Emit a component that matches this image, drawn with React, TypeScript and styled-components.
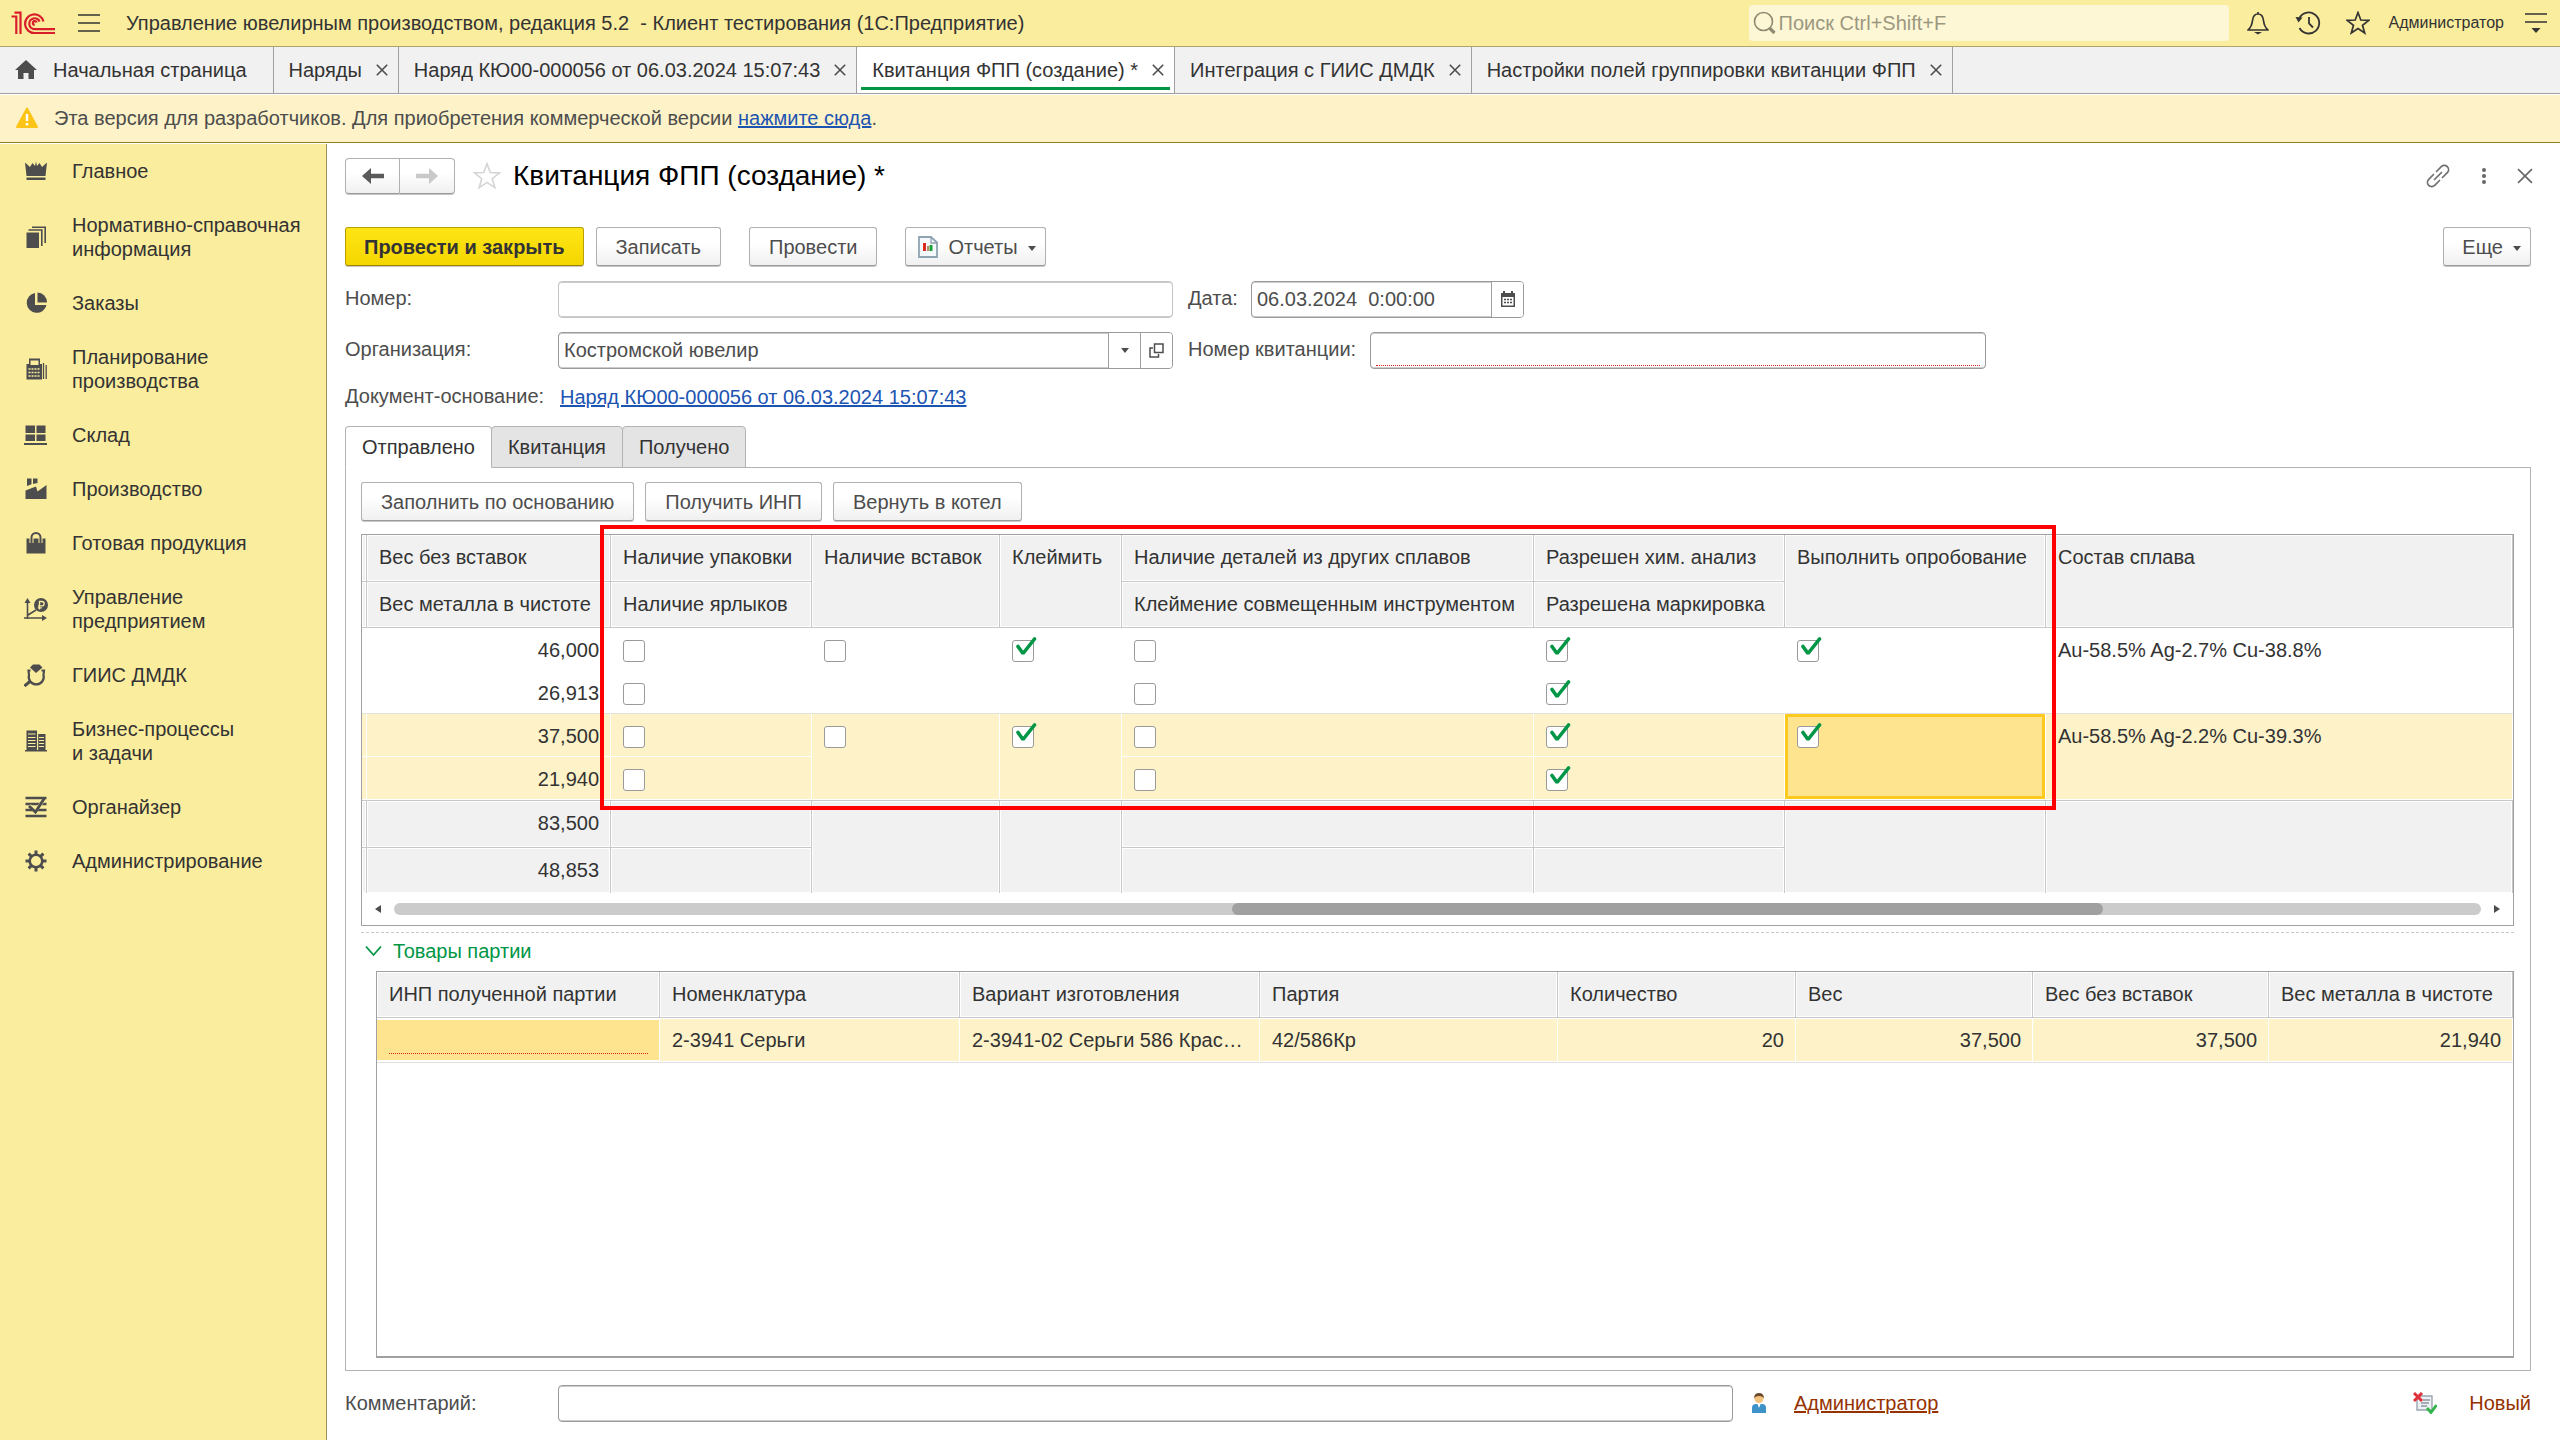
import React from "react";
import styled, { createGlobalStyle, css } from "styled-components";

const c = {
  header: "#fbed9e",
  pale: "#fdf2c8",
  active: "#fee48f",
  grey: "#f1f1f1",
  line: "#c8c8c8",
  frame: "#a0a0a0",
  text: "#333333",
  soft: "#4d4d4d",
  green: "#009646",
  blue: "#1c54b2",
  brown: "#963200",
};

const GlobalStyle = createGlobalStyle`
  *, *::before, *::after { box-sizing: border-box; }
  body { margin: 0; background: #fff; }
  body, button, input {
    font-family: "Liberation Sans", Arial, sans-serif;
    font-size: 20px;
    line-height: 24px;
    color: ${c.text};
  }
  button { cursor: pointer; }
  svg { display: block; flex: none; }
`;

/* ---------- shell ---------- */

const Page = styled.div`
  display: flex;
  flex-direction: column;
  min-height: 100vh;
`;

const TopBar = styled.header`
  display: flex;
  align-items: center;
  height: 47px;
  padding: 0 12px 0 11px;
  background: ${c.header};
  border-bottom: 1px solid #aea46a;
`;

const PlainButton = styled.button<{ $w?: number }>`
  display: flex;
  align-items: center;
  justify-content: center;
  flex: none;
  width: ${(p) => p.$w ?? 24}px;
  height: 36px;
  padding: 0;
  border: 0;
  background: none;
`;

const MenuButton = styled(PlainButton)`
  margin: 0 25px 0 22px;
`;

const AppTitle = styled.div`
  flex: 1;
  white-space: pre;
`;

const Search = styled.label`
  display: flex;
  align-items: center;
  gap: 2px;
  width: 480px;
  height: 36px;
  margin-right: 4px;
  padding-left: 4px;
  border-radius: 4px;
  background: #fdf7d6;
`;

const SearchInput = styled.input`
  flex: 1;
  min-width: 0;
  padding: 0;
  border: 0;
  outline: 0;
  background: none;
  &::placeholder {
    color: #9c9880;
    opacity: 1;
  }
`;

const UserName = styled.span`
  margin: 0 20px 0 6px;
  font-size: 16px;
`;

const WindowTabs = styled.nav`
  display: flex;
  height: 47px;
  margin-bottom: 1px;
  background: ${c.grey};
  border-bottom: 1px solid ${c.frame};
`;

const WindowTab = styled.div<{ $active?: boolean }>`
  display: flex;
  align-items: center;
  gap: 14px;
  padding: 0 10px 0 15px;
  border-right: 1px solid ${c.frame};
  white-space: nowrap;
  ${(p) =>
    p.$active &&
    css`
      background: linear-gradient(${c.green}, ${c.green}) center bottom 3px / calc(100% - 8px) 3px no-repeat #fff;
    `}
`;

const HomeTab = styled(WindowTab)`
  gap: 16px;
  padding: 0 26px 0 15px;
`;

const TabLink = styled.button`
  padding: 0;
  border: 0;
  background: none;
  white-space: nowrap;
`;

const Banner = styled.div`
  display: flex;
  align-items: center;
  gap: 15px;
  height: 48px;
  margin-bottom: 1px;
  padding: 0 0 2px 15px;
  background: ${c.pale};
  border-bottom: 1px solid #94801e;
  color: ${c.soft};
`;

const Link = styled.a<{ $brown?: boolean }>`
  color: ${(p) => (p.$brown ? c.brown : c.blue)};
  text-decoration-thickness: 2px;
  text-underline-offset: 1px;
`;

const Body = styled.div`
  display: flex;
  flex: 1;
`;

const Sidebar = styled.nav`
  flex: none;
  width: 327px;
  background: ${c.header};
  border-right: 1px solid #9b9058;
`;

const SideItem = styled.button`
  display: flex;
  align-items: center;
  gap: 24px;
  width: 100%;
  padding: 15px 20px 15px 24px;
  border: 0;
  background: none;
  text-align: left;
  white-space: pre-line;
`;

const Main = styled.main`
  display: flex;
  flex: 1;
  flex-direction: column;
  min-width: 0;
  padding: 14px 29px 18px 18px;
`;

/* ---------- form ---------- */

const TitleRow = styled.div`
  display: flex;
  align-items: center;
  height: 36px;
`;

const raised = css`
  border: 1px solid #b0b0b0;
  border-bottom-color: #999;
  background: linear-gradient(#fff 40%, #f0f0f0);
  box-shadow: 0 1px 0 #c8c8c8;
`;

const NavButton = styled.button`
  ${raised}
  display: flex;
  align-items: center;
  justify-content: center;
  width: 55px;
  height: 36px;
  padding: 0;
  border-radius: 4px 0 0 4px;
  & + & {
    border-left: 0;
    border-radius: 0 4px 4px 0;
  }
`;

const StarButton = styled(PlainButton)`
  margin: 0 12px 0 18px;
`;

const CloseButton = styled(PlainButton)`
  margin-left: 12px;
`;

const Title = styled.h1`
  flex: 1;
  margin: 0;
  font-size: 28px;
  line-height: 36px;
  font-weight: 400;
  color: #000;
`;

const Toolbar = styled.div`
  display: flex;
  gap: 12px;
  margin: 33px 0 15px;
`;

const Button = styled.button<{ $primary?: boolean; $icon?: boolean }>`
  ${raised}
  display: flex;
  align-items: center;
  gap: 10px;
  height: 39px;
  padding: 0 19px;
  border-radius: 3px;
  color: ${c.soft};
  white-space: nowrap;
  ${(p) =>
    p.$primary &&
    css`
      padding: 0 18px;
      border-color: #b9a000 #b9a000 #9a8400;
      background: linear-gradient(#ffe516, #f4d600);
      color: ${c.text};
      font-weight: 700;
    `}
  ${(p) => p.$icon && css`padding: 0 9px 0 12px;`}
`;

const MoreButton = styled(Button)`
  margin-left: auto;
  padding: 0 9px 0 18px;
`;

const Gap = styled.span`
  width: 4px;
`;

const MenuCaret = styled.span`
  padding-top: 4px;
`;

const FormRow = styled.div`
  display: flex;
  align-items: center;
  height: 36px;
  margin-bottom: 15px;
`;

const Label = styled.label<{ $w?: number }>`
  flex: none;
  width: ${(p) => (p.$w ? p.$w + "px" : "auto")};
  margin-bottom: 2px;
  color: ${c.soft};
`;

const Field = styled.div<{ $w: number; $muted?: boolean; $gap?: number }>`
  display: flex;
  flex: 0 1 ${(p) => p.$w}px;
  height: 37px;
  margin-right: ${(p) => p.$gap ?? 0}px;
  overflow: hidden;
  border: 1px solid ${(p) => (p.$muted ? "#c4c4c4" : "#9a9a9a")};
  border-radius: 4px;
  box-shadow: inset 0 1px 0 #ccc, inset 0 -1px 0 #ccc;
`;

const Input = styled.input<{ $required?: boolean }>`
  flex: 1;
  min-width: 0;
  margin: 0 5px;
  padding: 0;
  border: 0;
  outline: 0;
  background: none;
  color: ${c.soft};
  ${(p) =>
    p.$required &&
    css`
      margin-bottom: 2px;
      border-bottom: 1px dotted #e02020;
    `}
`;

const FieldButton = styled(PlainButton)`
  width: 32px;
  height: 100%;
  border-left: 1px solid ${c.frame};
  background: #fff;
`;

const BasisRow = styled(FormRow)`
  height: 24px;
  margin: 2px 0 17px;
`;

const PageTabs = styled.div`
  display: flex;
`;

const PageTab = styled.button<{ $active?: boolean }>`
  height: 42px;
  padding: 0 16px;
  border: 1px solid #b3b3b3;
  border-radius: 4px 4px 0 0;
  background: #e4e4e4;
  & + & {
    margin-left: -1px;
  }
  ${(p) =>
    p.$active &&
    css`
      position: relative;
      z-index: 1;
      border-bottom-color: #fff;
      background: #fff;
    `}
`;

const Panel = styled.section`
  display: flex;
  flex: 1;
  flex-direction: column;
  margin-top: -1px;
  padding: 14px 16px 12px 15px;
  border: 1px solid #b3b3b3;
`;

const PanelTools = styled.div`
  display: flex;
  gap: 11px;
  margin-bottom: 13px;
`;

/* ---------- tables ---------- */

const TableFrame = styled.div<{ $grow?: boolean }>`
  position: relative;
  border: 1px solid ${c.frame};
  ${(p) =>
    p.$grow &&
    css`
      flex: 1;
      margin-left: 15px;
      border-bottom-width: 2px;
    `}
`;

const Table = styled.table`
  width: 100%;
  table-layout: fixed;
  border-collapse: separate;
  border-spacing: 0;
`;

const HeadCell = styled.th<{ $first?: boolean }>`
  height: ${(p) => (p.$first ? 47 : 46)}px;
  padding: 10px 0 0 12px;
  border: solid ${c.line};
  border-width: 0 1px 1px 0;
  background: ${c.grey};
  box-shadow: inset 0 0 0 1px #fff;
  font-weight: 400;
  text-align: left;
  vertical-align: top;
  white-space: nowrap;
`;

const FootCell = styled.td<{ $first?: boolean }>`
  height: ${(p) => (p.$first ? 47 : 46)}px;
  padding: 10px 11px 0;
  border: solid ${c.line};
  border-width: 1px 1px 0 0;
  background: ${c.grey};
  box-shadow: inset 0 0 0 1px #fff;
  text-align: right;
  vertical-align: top;
`;

const Cell = styled.td<{ $sel?: boolean; $current?: boolean; $end?: boolean; $right?: boolean }>`
  height: 43px;
  padding: 10px 11px 0 12px;
  border: solid transparent;
  border-width: 0 1px 1px 0;
  text-align: ${(p) => (p.$right ? "right" : "left")};
  vertical-align: top;
  white-space: nowrap;
  ${(p) => p.$end && css`border-bottom-color: #e0e0e0;`}
  ${(p) =>
    p.$sel &&
    css`
      border-color: #fff;
      background: ${c.pale};
    `}
  ${(p) =>
    p.$current &&
    css`
      background: ${c.active};
      box-shadow: inset 0 0 0 3px #fcca1e;
    `}
`;

const ItemCell = styled(Cell)`
  height: 45px;
  border-bottom-color: #e0e0e0;
  box-shadow: inset 0 1px 0 #fff, inset 0 -1px 0 #fff;
`;

const CurrentItemCell = styled(ItemCell)`
  background: ${c.active};
  box-shadow: inset 0 2px 0 #fff, inset 0 -2px 0 #fff;
`;

const CellInput = styled.input`
  display: block;
  width: 100%;
  height: 26px;
  padding: 0;
  border: 0;
  border-bottom: 1px dotted #e02020;
  outline: 0;
  background: none;
`;

const CheckWrap = styled.span`
  position: relative;
  display: block;
  width: 22px;
  height: 22px;
  margin-top: 2px;
`;

const CheckInput = styled.input`
  display: block;
  width: 22px;
  height: 22px;
  margin: 0;
  appearance: none;
  border: 1px solid #9a9a9a;
  border-radius: 3px;
  background: #fff;
`;

const CheckMark = styled.svg`
  position: absolute;
  left: 4px;
  top: -3px;
  pointer-events: none;
`;

const ScrollBar = styled.div`
  display: flex;
  align-items: center;
  justify-content: space-between;
  gap: 12px;
  height: 32px;
  padding: 0 12px;
`;

const Track = styled.div`
  display: flex;
  flex: 1;
  height: 12px;
  border-radius: 6px;
  background: #cbcbcb;
`;

const TrackPart = styled.div<{ $size: number; $thumb?: boolean }>`
  flex: ${(p) => p.$size} 1 0;
  border-radius: 6px;
  background: ${(p) => (p.$thumb ? "#a0a0a0" : "none")};
`;

const Highlight = styled.div`
  position: absolute;
  left: 238px;
  top: -10px;
  width: 1456px;
  height: 285px;
  border: 4px solid #f00;
  pointer-events: none;
`;

const GroupHeader = styled.button`
  display: flex;
  align-items: center;
  gap: 11px;
  margin-top: 6px;
  padding: 6px 0 8px 4px;
  border: 0;
  border-top: 1px dashed ${c.line};
  background: none;
  color: ${c.green};
  text-align: left;
`;

const Footer = styled.footer`
  display: flex;
  align-items: center;
  margin-top: 14px;
`;

const State = styled.span`
  display: flex;
  align-items: center;
  gap: 32px;
  margin: 0 0 2px auto;
  color: ${c.brown};
`;

const Author = styled.span`
  display: flex;
  align-items: center;
  gap: 27px;
  margin-bottom: 2px;
`;

/* ---------- icons ---------- */

const Cross = ({ size = 12, color = "#4d4d4d", w = 1.6 }: { size?: number; color?: string; w?: number }) => (
  <svg width={size} height={size} viewBox="0 0 12 12" stroke={color} strokeWidth={w} fill="none">
    <path d="M.8.8l10.4 10.4M11.2.8L.8 11.2" />
  </svg>
);

const Caret = () => (
  <svg width="8" height="5" viewBox="0 0 8 5" fill={c.soft}>
    <path d="M0 0h8L4 5z" />
  </svg>
);

const Logo = () => (
  <svg width="44" height="24" viewBox="0 0 44 24" fill="none" stroke="#d91e2b" strokeWidth="2.2">
    <path d="M.5 5.5h4.8V23M3.5 1.6h6V23" />
    <path d="M32.4 10.5A9.3 9.3 0 1 0 23.5 22H44" />
    <path d="M28.6 10.5a5.4 5.4 0 1 0-5.1 7.6H44" />
    <path d="M25.6 11.5a1.9 1.9 0 1 0-1.9 2.4" />
  </svg>
);

const sideIcons: Record<string, React.ReactNode> = {
  crown: <path d="M1 3.500l5 4.500 2.500-4L11 7l1-4.500L13 7l2.500-3L18 8l5-4.500L21.500 17h-19zM2.500 18.500h19V21h-19z" />,
  docs: (
    <>
      <path d="M2.500 7.500h12.500v15.500H2.500z" />
      <path d="M4.500 5H17.800V21M8 2.200H21.200V18" fill="none" stroke="#4d4d4d" strokeWidth="1.600" />
    </>
  ),
  pie: (
    <>
      <path d="M11 2a10 10 0 1 0 11.500 12H11z" />
      <path d="M13.500 1.500V11.500h9.500A10 10 0 0 0 13.500 1.500z" />
    </>
  ),
  calc: (
    <>
      <path d="M5 1.500h11v5.500h2v15.500H2.500V7H5z" />
      <path d="M19.500 6v16M22.200 8v14" stroke="#4d4d4d" strokeWidth="1.300" />
      <path d="M6.500 3.500h8v4.500h-8z" fill={c.header} />
      <path d="M4.500 12h11.500M4.500 15.500h11.500M4.500 19h11.500" stroke={c.header} strokeWidth="1.500" strokeDasharray="2 1" />
    </>
  ),
  shelf: <path d="M1.500 2.500h9.500v7.500H1.500zM12.500 2.500H21.500v7.500h-9zM1.500 11.500h9.500v6.500H1.500zM12.500 11.500H21.500v6.500h-9zM0 20h23v2H0z" />,
  factory: <path d="M1.500 22V13.500L12 9.500 13.500 14.500 22.500 8v14zM3 1.500h4.500v5.800L3 9zM9 1.500h4.500v4.500L9 7z" />,
  bag: (
    <>
      <path d="M2.500 7.500h19v15h-19z" />
      <path d="M7.500 12V6.500a4.500 4.500 0 0 1 9 0V12" fill="none" stroke={c.header} strokeWidth="4" />
      <path d="M7.500 12V6.500a4.500 4.500 0 0 1 9 0V12" fill="none" stroke="#4d4d4d" strokeWidth="2" />
    </>
  ),
  growth: (
    <>
      <path d="M3.500 4v18M0 21h20M4 18l8-5" fill="none" stroke="#4d4d4d" strokeWidth="1.600" />
      <path d="M3.500 1l3 5h-6zM23 21l-5-3v6z" />
      <circle cx="17" cy="8" r="7" />
      <path d="M15.500 12.500V4.500h2.500a2 2 0 0 1 0 4.300h-4M13.800 10.800h4" fill="none" stroke={c.header} strokeWidth="1.300" />
    </>
  ),
  search: (
    <>
      <path d="M9 1.500h6.500l3 3L12 10 6 4.500z" />
      <path d="M6.500 7.500H4.500L5 12a7.500 7.500 0 1 0 14.500 0l.5-4.500h-2.500" fill="none" stroke="#4d4d4d" strokeWidth="2.200" />
      <path d="M6.500 18l-6 5" stroke="#4d4d4d" strokeWidth="3" />
    </>
  ),
  building: (
    <>
      <path d="M2.500 1.500H13v20H2.500zM14.200 5H21.500v16.500h-7.300zM1 21h22v1.500H1z" />
      <path d="M4 5h7.500M4 8.500h7.500M4 11.500h7.500M4 14.500h7.500M4 17.500h7.500M15 8.500h5M15 11.500h5M15 14.500h5M15 17.500h5" stroke={c.header} strokeWidth="1" />
    </>
  ),
  list: (
    <>
      <path d="M1.500 3h21M1.500 9h21M1.500 15h21M1.500 21h21" fill="none" stroke="#4d4d4d" strokeWidth="2.400" />
      <path d="M5.500 10.500l6 5.500L19 6" fill="none" stroke={c.header} strokeWidth="3.400" />
      <path d="M5 11l6.500 6L20.500 3" fill="none" stroke="#4d4d4d" strokeWidth="2.800" />
    </>
  ),
  gear: (
    <>
      <circle cx="12" cy="12" r="6.300" fill="none" stroke="#4d4d4d" strokeWidth="2.600" />
      <path d="M12 1.500v4M12 18.500v4M1.500 12h4M18.500 12h4M4.600 4.600l2.800 2.800M16.600 16.600l2.800 2.800M4.600 19.400l2.800-2.800M16.600 7.400l2.800-2.800" stroke="#4d4d4d" strokeWidth="3" />
    </>
  ),
};

const sideItems: [string, string][] = [
  ["crown", "Главное"],
  ["docs", "Нормативно-справочная\nинформация"],
  ["pie", "Заказы"],
  ["calc", "Планирование\nпроизводства"],
  ["shelf", "Склад"],
  ["factory", "Производство"],
  ["bag", "Готовая продукция"],
  ["growth", "Управление\nпредприятием"],
  ["search", "ГИИС ДМДК"],
  ["building", "Бизнес-процессы\nи задачи"],
  ["list", "Органайзер"],
  ["gear", "Администрирование"],
];

const windowTabs = [
  "Наряды",
  "Наряд КЮ00-000056 от 06.03.2024 15:07:43",
  "Квитанция ФПП (создание) *",
  "Интеграция с ГИИС ДМДК",
  "Настройки полей группировки квитанции ФПП",
];

const Check = ({ on, name }: { on?: boolean; name: string }) => (
  <CheckWrap>
    <CheckInput type="checkbox" defaultChecked={on} aria-label={name} />
    {on && (
      <CheckMark width="21" height="20" viewBox="0 0 21 20" fill="none" stroke={c.green} strokeWidth="3.600">
        <path d="M2 9.500l5 7L18.500 2" strokeLinejoin="bevel" strokeLinecap="round" />
      </CheckMark>
    )}
  </CheckWrap>
);

const batches = [
  { net: "46,000", pure: "26,913", alloy: "Au-58.5% Ag-2.7% Cu-38.8%", sel: false },
  { net: "37,500", pure: "21,940", alloy: "Au-58.5% Ag-2.2% Cu-39.3%", sel: true },
];

const goodsColumns = ["ИНП полученной партии", "Номенклатура", "Вариант изготовления", "Партия", "Количество", "Вес", "Вес без вставок", "Вес металла в чистоте"];
const goodsRow = ["2-3941 Серьги", "2-3941-02 Серьги 586 Крас…", "42/586Кр", "20", "37,500", "37,500", "21,940"];

const Columns = ({ widths }: { widths: number[] }) => (
  <colgroup>
    {widths.map((w, i) => (
      <col key={i} width={w} />
    ))}
    <col />
  </colgroup>
);

/* ---------- sections ---------- */

const BatchTable = () => (
  <TableFrame>
    <Table>
      <Columns widths={[5, 244, 201, 188, 122, 412, 251, 261]} />
      <thead>
        <tr>
          <HeadCell $first />
          <HeadCell $first>Вес без вставок</HeadCell>
          <HeadCell $first>Наличие упаковки</HeadCell>
          <HeadCell rowSpan={2}>Наличие вставок</HeadCell>
          <HeadCell rowSpan={2}>Клеймить</HeadCell>
          <HeadCell $first>Наличие деталей из других сплавов</HeadCell>
          <HeadCell $first>Разрешен хим. анализ</HeadCell>
          <HeadCell rowSpan={2}>Выполнить опробование</HeadCell>
          <HeadCell rowSpan={2}>Состав сплава</HeadCell>
        </tr>
        <tr>
          <HeadCell />
          <HeadCell>Вес металла в чистоте</HeadCell>
          <HeadCell>Наличие ярлыков</HeadCell>
          <HeadCell>Клеймение совмещенным инструментом</HeadCell>
          <HeadCell>Разрешена маркировка</HeadCell>
        </tr>
      </thead>
      <tbody>
        {batches.map((b) => (
          <React.Fragment key={b.net}>
            <tr>
              <Cell $sel={b.sel} />
              <Cell $sel={b.sel} $right>{b.net}</Cell>
              <Cell $sel={b.sel}><Check name="Наличие упаковки" /></Cell>
              <Cell $sel={b.sel} $end rowSpan={2}><Check name="Наличие вставок" /></Cell>
              <Cell $sel={b.sel} $end rowSpan={2}><Check on name="Клеймить" /></Cell>
              <Cell $sel={b.sel}><Check name="Наличие деталей из других сплавов" /></Cell>
              <Cell $sel={b.sel}><Check on name="Разрешен хим. анализ" /></Cell>
              <Cell $sel={b.sel} $end $current={b.sel} rowSpan={2}><Check on name="Выполнить опробование" /></Cell>
              <Cell $sel={b.sel} $end rowSpan={2}>{b.alloy}</Cell>
            </tr>
            <tr>
              <Cell $sel={b.sel} $end />
              <Cell $sel={b.sel} $end $right>{b.pure}</Cell>
              <Cell $sel={b.sel} $end><Check name="Наличие ярлыков" /></Cell>
              <Cell $sel={b.sel} $end><Check name="Клеймение совмещенным инструментом" /></Cell>
              <Cell $sel={b.sel} $end><Check on name="Разрешена маркировка" /></Cell>
            </tr>
          </React.Fragment>
        ))}
      </tbody>
      <tfoot>
        <tr>
          <FootCell $first />
          <FootCell $first>83,500</FootCell>
          <FootCell $first />
          <FootCell rowSpan={2} />
          <FootCell rowSpan={2} />
          <FootCell $first />
          <FootCell $first />
          <FootCell rowSpan={2} />
          <FootCell rowSpan={2} />
        </tr>
        <tr>
          <FootCell />
          <FootCell>48,853</FootCell>
          <FootCell />
          <FootCell />
          <FootCell />
        </tr>
      </tfoot>
    </Table>
    <ScrollBar>
      <svg width="8" height="8" viewBox="0 0 8 8" fill={c.soft}><path d="M7 0v8L1 4z" /></svg>
      <Track>
        <TrackPart $size={838} />
        <TrackPart $size={871} $thumb />
        <TrackPart $size={378} />
      </Track>
      <svg width="8" height="8" viewBox="0 0 8 8" fill={c.soft}><path d="M1 0v8l6-4z" /></svg>
    </ScrollBar>
    <Highlight />
  </TableFrame>
);

const GoodsTable = () => (
  <TableFrame $grow>
    <Table>
      <Columns widths={[283, 300, 300, 298, 238, 237, 236]} />
      <thead>
        <tr>
          {goodsColumns.map((t) => (
            <HeadCell key={t}>{t}</HeadCell>
          ))}
        </tr>
      </thead>
      <tbody>
        <tr>
          <CurrentItemCell $sel>
            <CellInput aria-label="ИНП полученной партии" />
          </CurrentItemCell>
          {goodsRow.map((t, i) => (
            <ItemCell key={i} $sel $right={i > 2}>{t}</ItemCell>
          ))}
        </tr>
      </tbody>
    </Table>
  </TableFrame>
);

export default function App() {
  return (
    <Page>
      <GlobalStyle />
      <TopBar>
        <Logo />
        <MenuButton aria-label="Меню">
          <svg width="22" height="18" viewBox="0 0 22 18" stroke={c.text} strokeWidth="1.700">
            <path d="M0 1h22M0 9h22M0 17h22" />
          </svg>
        </MenuButton>
        <AppTitle>{"Управление ювелирным производством, редакция 5.2  - Клиент тестирования (1С:Предприятие)"}</AppTitle>
        <Search>
          <svg width="24" height="24" viewBox="0 0 24 24" fill="none" stroke="#8f8b70">
            <circle cx="10.500" cy="10.500" r="9" strokeWidth="1.600" />
            <path d="M16.500 17l5 5" strokeWidth="3.200" />
          </svg>
          <SearchInput type="search" placeholder="Поиск Ctrl+Shift+F" />
        </Search>
        <PlainButton $w={50} aria-label="Уведомления">
          <svg width="24" height="24" viewBox="0 0 24 24" fill="none" stroke={c.text} strokeWidth="1.700">
            <path d="M12 1v2M2 19c3-2.500 4-5 4.500-9.500C7 5 9 3 12 3s5 2 5.500 6.500C18 14 19 16.500 22 19z" strokeLinejoin="round" />
            <path d="M8 21h8l-4 2.500z" fill={c.text} stroke="none" />
          </svg>
        </PlainButton>
        <PlainButton $w={50} aria-label="История">
          <svg width="26" height="24" viewBox="0 0 26 24" fill="none" stroke={c.text} strokeWidth="1.800">
            <path d="M4 8A10.500 10.500 0 1 1 4.500 17" />
            <path d="M14 6v6.500l4 4" />
            <path d="M.5 6l7 .5-4 5z" fill={c.text} stroke="none" />
          </svg>
        </PlainButton>
        <PlainButton $w={50} aria-label="Избранное">
          <svg width="24" height="24" viewBox="0 0 24 24" fill="none" stroke={c.text} strokeWidth="1.700">
            <path d="M12 1.500l2.800 7.500 8 .3-6.300 5 2.200 7.700L12 17.500 5.300 22l2.200-7.700-6.300-5 8-.3z" />
          </svg>
        </PlainButton>
        <UserName>Администратор</UserName>
        <PlainButton aria-label="Настройка">
          <svg width="22" height="22" viewBox="0 0 22 22" fill="none" stroke={c.text} strokeWidth="1.700">
            <path d="M0 2h22M0 10h22" />
            <path d="M6.500 16h9L11 21z" fill={c.text} stroke="none" />
          </svg>
        </PlainButton>
      </TopBar>

      <WindowTabs>
        <HomeTab>
          <svg width="22" height="20" viewBox="0 0 22 20" fill={c.soft}>
            <path d="M11 0l11 10h-3v9h-5.500v-6h-5v6H3v-9H0z" />
          </svg>
          <TabLink>Начальная страница</TabLink>
        </HomeTab>
        {windowTabs.map((t, i) => (
          <WindowTab key={t} $active={i === 2}>
            <TabLink>{t}</TabLink>
            <PlainButton $w={12} aria-label="Закрыть вкладку"><Cross /></PlainButton>
          </WindowTab>
        ))}
      </WindowTabs>

      <Banner>
        <svg width="24" height="22" viewBox="0 0 24 22">
          <path d="M12 1.500L22 20H2z" fill="#fcc419" stroke="#fcc419" strokeWidth="2" strokeLinejoin="round" />
          <path d="M12 7v7M12 16v2.500" stroke="#fff" strokeWidth="2.400" />
        </svg>
        <span>
          Эта версия для разработчиков. Для приобретения коммерческой версии <Link href="#buy">нажмите сюда</Link>.
        </span>
      </Banner>

      <Body>
        <Sidebar>
          {sideItems.map(([icon, label]) => (
            <SideItem key={icon}>
              <svg width="24" height="24" viewBox="0 0 24 24" fill="#4d4d4d">{sideIcons[icon]}</svg>
              <span>{label}</span>
            </SideItem>
          ))}
        </Sidebar>

        <Main>
          <TitleRow>
            <NavButton aria-label="Назад">
              <svg width="22" height="16" viewBox="0 0 22 16" fill="#5a5a5a"><path d="M0 8l9-8v5.800h13v4.400H9V16z" /></svg>
            </NavButton>
            <NavButton aria-label="Вперед" disabled>
              <svg width="22" height="16" viewBox="0 0 22 16" fill="#c9c9c9"><path d="M22 8l-9-8v5.800H0v4.400h13V16z" /></svg>
            </NavButton>
            <StarButton $w={28} aria-label="В избранное">
              <svg width="28" height="28" viewBox="0 0 24 24" fill="none" stroke="#d5d5d5" strokeWidth="1.400">
                <path d="M12 1.500l2.800 7.500 8 .3-6.300 5 2.200 7.700L12 17.500 5.300 22l2.200-7.700-6.300-5 8-.3z" />
              </svg>
            </StarButton>
            <Title>Квитанция ФПП (создание) *</Title>
            <PlainButton $w={46} aria-label="Ссылка">
              <svg width="24" height="24" viewBox="0 0 24 24" fill="none" stroke="#707070" strokeWidth="1.700" strokeLinecap="round">
                <path d="M8.500 15.500l7-7M10.500 7.500l4.800-4.800a4 4 0 0 1 6 6l-4.800 4.800M13.500 16.500l-4.800 4.800a4 4 0 0 1-6-6l4.800-4.800" />
              </svg>
            </PlainButton>
            <PlainButton $w={46} aria-label="Дополнительно">
              <svg width="4" height="16" viewBox="0 0 4 16" fill="#666"><circle cx="2" cy="2" r="2" /><circle cx="2" cy="8" r="2" /><circle cx="2" cy="14" r="2" /></svg>
            </PlainButton>
            <CloseButton $w={12} aria-label="Закрыть"><Cross size={16} color="#666" w={1.2} /></CloseButton>
          </TitleRow>

          <Toolbar>
            <Button $primary>Провести и закрыть</Button>
            <Button>Записать</Button>
            <Gap />
            <Button>Провести</Button>
            <Gap />
            <Button $icon>
              <svg width="20" height="22" viewBox="0 0 20 22" fill="none">
                <path d="M1 1h12l6 5.500V21H1z" fill="#f4f8fb" stroke="#8fa3b1" strokeWidth="1.800" />
                <path d="M13 1v6h6" stroke="#8fa3b1" strokeWidth="1.300" />
                <path d="M6.500 7v8" stroke="#e02a1f" strokeWidth="3" />
                <path d="M10 10v5" stroke="#b98c6a" strokeWidth="2" />
                <path d="M13 9v6" stroke="#1da035" strokeWidth="3" />
              </svg>
              Отчеты <MenuCaret><Caret /></MenuCaret>
            </Button>
            <MoreButton>Еще <MenuCaret><Caret /></MenuCaret></MoreButton>
          </Toolbar>

          <FormRow>
            <Label htmlFor="number" $w={213}>Номер:</Label>
            <Field $w={615} $muted $gap={15}><Input id="number" /></Field>
            <Label htmlFor="date" $w={63}>Дата:</Label>
            <Field $w={273}>
              <Input id="date" defaultValue="06.03.2024  0:00:00" />
              <FieldButton aria-label="Выбрать дату">
                <svg width="14" height="16" viewBox="0 0 14 16">
                  <path d="M0 2h14v14H0z" fill={c.soft} />
                  <path d="M3 0v3M11 0v3" stroke={c.soft} strokeWidth="2" />
                  <path d="M1.500 6h11v8.500h-11z" fill="#fff" />
                  <path d="M3 8.500h8M3 11.500h8" stroke={c.soft} strokeWidth="1.500" strokeDasharray="2 1" />
                </svg>
              </FieldButton>
            </Field>
          </FormRow>

          <FormRow>
            <Label htmlFor="org" $w={213}>Организация:</Label>
            <Field $w={615} $gap={15}>
              <Input id="org" defaultValue="Костромской ювелир" />
              <FieldButton aria-label="Выбрать организацию"><Caret /></FieldButton>
              <FieldButton aria-label="Открыть организацию">
                <svg width="15" height="15" viewBox="0 0 15 15" fill="none" stroke={c.soft} strokeWidth="1.500">
                  <path d="M5.500 1h8.500v8.500H5.500zM4 5H1v9h8.500v-3" />
                </svg>
              </FieldButton>
            </Field>
            <Label htmlFor="receipt" $w={182}>Номер квитанции:</Label>
            <Field $w={616}><Input id="receipt" $required /></Field>
          </FormRow>

          <BasisRow>
            <Label as="span" $w={215}>Документ-основание:</Label>
            <Link href="#basis">Наряд КЮ00-000056 от 06.03.2024 15:07:43</Link>
          </BasisRow>

          <PageTabs role="tablist">
            <PageTab role="tab" $active>Отправлено</PageTab>
            <PageTab role="tab">Квитанция</PageTab>
            <PageTab role="tab">Получено</PageTab>
          </PageTabs>

          <Panel>
            <PanelTools>
              <Button>Заполнить по основанию</Button>
              <Button>Получить ИНП</Button>
              <Button>Вернуть в котел</Button>
            </PanelTools>
            <BatchTable />
            <GroupHeader>
              <svg width="17" height="12" viewBox="0 0 17 12" fill="none" stroke={c.green} strokeWidth="1.800"><path d="M1 1.500l7.500 8.500L16 1.500" /></svg>
              Товары партии
            </GroupHeader>
            <GoodsTable />
          </Panel>

          <Footer>
            <Label htmlFor="comment" $w={213}>Комментарий:</Label>
            <Field $w={1175} $gap={18}><Input id="comment" /></Field>
            <Author>
              <svg width="16" height="20" viewBox="0 0 16 20">
                <path d="M1 20v-5q0-4 4-4h6q4 0 4 4v5z" fill="#3d93c8" />
                <path d="M6 10h4l-2 5z" fill="#fff" />
                <circle cx="8" cy="5.500" r="4.500" fill="#f3c27c" />
                <path d="M3 5.500Q3 0 8 0t5 5.500Q12 3 8 3T3 5.500z" fill="#6b4a2c" />
              </svg>
              <Link href="#author" $brown>Администратор</Link>
            </Author>
            <State>
              <svg width="24" height="22" viewBox="0 0 24 22" fill="none">
                <path d="M4 4h15v14H4z" fill="#eef1f4" stroke="#9aa5b0" strokeWidth="1.400" />
                <path d="M10 8h7M8 11h8M8 14h6" stroke="#8d98a3" strokeWidth="1.300" />
                <path d="M1 1l8 8M9 1L1 9" stroke="#e0303a" strokeWidth="3" />
                <path d="M14 16l4 4.500L23.500 13" stroke="#2fb54a" strokeWidth="2.800" />
              </svg>
              Новый
            </State>
          </Footer>
        </Main>
      </Body>
    </Page>
  );
}
